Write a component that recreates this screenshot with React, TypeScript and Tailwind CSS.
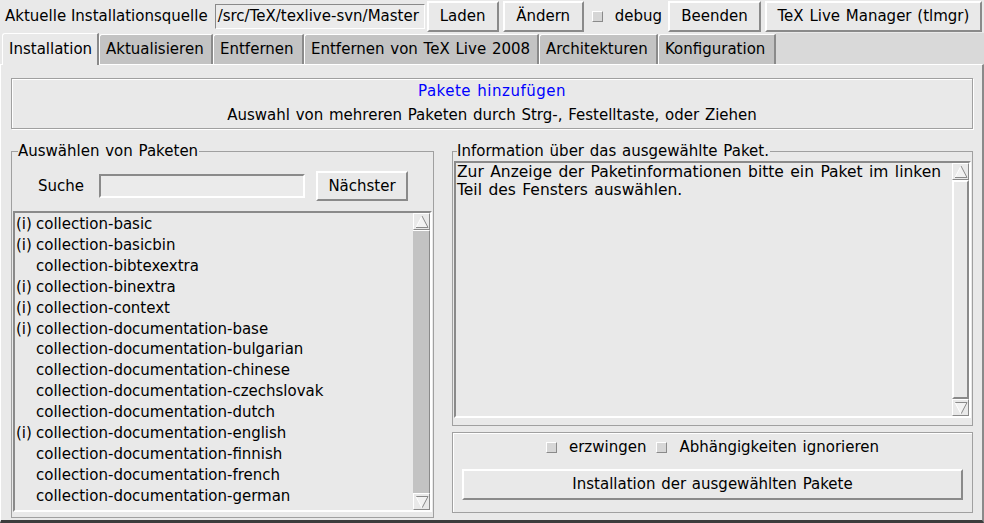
import React from "react";

function Button({ className = "", children }: { className?: string; children: React.ReactNode }) {
  return (
    <div
      className={`shrink-0 whitespace-nowrap flex items-center justify-center bg-[#e9e9e9] border-2 border-t-white border-l-white border-r-[#8a8a8a] border-b-[#8a8a8a] ${className}`}
    >
      {children}
    </div>
  );
}

function Check({ className = "" }: { className?: string }) {
  return (
    <span
      className={`shrink-0 inline-block w-[11px] h-[11px] bg-[#d6d6d6] border border-t-white border-l-white border-r-[#8a8a8a] border-b-[#8a8a8a] ${className}`}
    />
  );
}

function Arrow({ down = false }: { down?: boolean }) {
  return (
    <div className="w-[17px] h-[17px] shrink-0 flex items-center justify-center bg-[#e9e9e9] border border-t-white border-l-white border-r-[#8a8a8a] border-b-[#8a8a8a]">
      <svg width="14" height="14" viewBox="0 0 14 14">
        {down ? (
          <>
            <polygon points="1,1.5 13,1.5 7,13" fill="#f2f2f2" />
            <polyline points="1,1.5 13,1.5 7,13" fill="none" stroke="#8a8a8a" strokeWidth="1" />
            <line x1="1" y1="1.5" x2="7" y2="13" stroke="#ffffff" strokeWidth="1" />
          </>
        ) : (
          <>
            <polygon points="7,1 13,12.5 1,12.5" fill="#f2f2f2" />
            <line x1="7" y1="1" x2="1" y2="12.5" stroke="#ffffff" strokeWidth="1" />
            <polyline points="7,1 13,12.5 1,12.5" fill="none" stroke="#8a8a8a" strokeWidth="1" />
          </>
        )}
      </svg>
    </div>
  );
}

function ScrollBar({ gray }: { gray: boolean }) {
  return (
    <div className="w-[17px] h-full flex flex-col shrink-0">
      <Arrow />
      {gray ? (
        <div className="flex-1 bg-[#c3c3c3] border-t border-t-white border-r border-r-[#8a8a8a]" />
      ) : (
        <div className="flex-1 bg-[#e9e9e9] border-2 border-t-white border-l-white border-r-[#8a8a8a] border-b-[#8a8a8a]" />
      )}
      <Arrow down />
    </div>
  );
}

const items: [boolean, string][] = [
  [true, "collection-basic"],
  [true, "collection-basicbin"],
  [false, "collection-bibtexextra"],
  [true, "collection-binextra"],
  [true, "collection-context"],
  [true, "collection-documentation-base"],
  [false, "collection-documentation-bulgarian"],
  [false, "collection-documentation-chinese"],
  [false, "collection-documentation-czechslovak"],
  [false, "collection-documentation-dutch"],
  [true, "collection-documentation-english"],
  [false, "collection-documentation-finnish"],
  [false, "collection-documentation-french"],
  [false, "collection-documentation-german"],
];

const tabs: { label: string; w: string }[] = [
  { label: "Aktualisieren", w: "w-[114px]" },
  { label: "Entfernen", w: "w-[91px]" },
  { label: "Entfernen von TeX Live 2008", w: "w-[235px]" },
  { label: "Architekturen", w: "w-[119px]" },
  { label: "Konfiguration", w: "w-[118px]" },
];

export default function App() {
  return (
    <div className="w-[984px] h-[523px] overflow-hidden bg-[#e9e9e9] text-black text-[15px] leading-[17px] [word-spacing:1px] font-['DejaVu_Sans',sans-serif] flex flex-col">
      {/* Top row */}
      <div className="h-[33px] shrink-0 flex items-center pl-[5px] whitespace-nowrap">
        <span className="shrink-0 [word-spacing:0px]">Aktuelle Installationsquelle</span>
        <div className="shrink-0 ml-[7px] w-[210px] h-[25px] flex items-center pl-[2px] bg-[#ebebeb] border border-t-[#8a8a8a] border-l-[#8a8a8a] border-b-white border-r-white overflow-hidden">
          /src/TeX/texlive-svn/Master
        </div>
        <Button className="ml-[2px] w-[72px] h-[31px]">Laden</Button>
        <Button className="ml-[4px] w-[81px] h-[31px]">Ändern</Button>
        <Check className="ml-[8px]" />
        <span className="shrink-0 ml-[12px]">debug</span>
        <Button className="ml-[6px] w-[93px] h-[31px]">Beenden</Button>
        <Button className="ml-[4px] w-[217px] h-[31px]">TeX Live Manager (tlmgr)</Button>
      </div>

      {/* Tabs row */}
      <div className="h-[31px] shrink-0 flex items-end pl-[2px]">
        <div className="relative z-10 -mb-px w-[97px] h-[32px] flex items-center pl-[6px] bg-[#e9e9e9] border-t border-l border-t-white border-l-white border-r-2 border-r-[#8a8a8a] rounded-tl-[3px]">
          Installation
        </div>
        {tabs.map((t) => (
          <div
            key={t.label}
            className={`${t.w} h-[30px] flex items-center pl-[6px] bg-[#c3c3c3] border-t border-l border-t-white border-l-white border-r-2 border-r-[#8a8a8a] rounded-tl-[3px] whitespace-nowrap`}
          >
            {t.label}
          </div>
        ))}
        <div className="flex-1 h-full bg-[#d9d9d9]" />
      </div>

      {/* Content panel */}
      <div className="flex-1 flex flex-col pl-[10px] pt-[13px] border-t border-l border-t-white border-l-white border-r-2 border-r-[#8a8a8a] border-b-[3px] border-b-[#3c3c3c]">
        {/* Header box */}
        <div className="w-[962px] h-[51px] shrink-0 flex flex-col items-center border border-[#a0a0a0] shadow-[inset_1px_1px_0_#ffffff,1px_1px_0_#ffffff] leading-[24px]">
          <span className="text-[#0000ff] tracking-[0.5px]">Pakete hinzufügen</span>
          <span>Auswahl von mehreren Paketen durch Strg-, Festelltaste, oder Ziehen</span>
        </div>

        <div className="mt-[13px] flex gap-[18px]">
          {/* Left frame */}
          <fieldset className="w-[423px] h-[376px] border border-[#a0a0a0] px-[1px]">
            <legend className="ml-[5px] pr-[1px] leading-[18px]">Auswählen von Paketen</legend>
            <div className="mt-[11px] h-[30px] flex items-center pl-[25px]">
              <span>Suche</span>
              <div className="ml-[15px] w-[206px] h-[24px] bg-[#ebebeb] border-2 border-t-[#8a8a8a] border-l-[#8a8a8a] border-b-white border-r-white" />
              <Button className="ml-[11px] w-[92px] h-[30px]">Nächster</Button>
            </div>
            <div className="mt-[10px] h-[301px] flex border-2 border-t-[#8a8a8a] border-l-[#8a8a8a] border-b-white border-r-white">
              <div className="flex-1 pl-[1px] pt-[1px] leading-[20.9px] overflow-hidden">
                {items.map(([inst, name]) => (
                  <div key={name} className="flex whitespace-nowrap">
                    <span className="inline-block w-[20px]">{inst ? "(i)" : ""}</span>
                    <span>{name}</span>
                  </div>
                ))}
              </div>
              <ScrollBar gray />
            </div>
          </fieldset>

          {/* Right column */}
          <div className="w-[521px] flex flex-col">
            <fieldset className="h-[284px] border border-[#a0a0a0] px-[1px]">
              <legend className="ml-[3px] pr-[1px] leading-[18px]">Information über das ausgewählte Paket.</legend>
              <div className="mt-[1px] h-[257px] flex border-2 border-t-[#8a8a8a] border-l-[#8a8a8a] border-b-white border-r-white">
                <div className="flex-1 pl-[1px] text-[15.5px] leading-[18px] [word-spacing:1.5px] whitespace-nowrap">
                  Zur Anzeige der Paketinformationen bitte ein Paket im linken
                  <br />
                  Teil des Fensters auswählen.
                </div>
                <ScrollBar gray={false} />
              </div>
            </fieldset>
            <div className="mt-[6px] h-[81px] flex flex-col items-center border border-[#a0a0a0] shadow-[inset_1px_1px_0_#ffffff]">
              <div className="mt-[4px] h-[20px] flex items-center">
                <Check />
                <span className="ml-[12px]">erzwingen</span>
                <Check className="ml-[10px]" />
                <span className="ml-[12px]">Abhängigkeiten ignorieren</span>
              </div>
              <Button className="mt-[12px] w-[501px] h-[31px]">Installation der ausgewählten Pakete</Button>
            </div>
          </div>
        </div>
      </div>
    </div>
  );
}
